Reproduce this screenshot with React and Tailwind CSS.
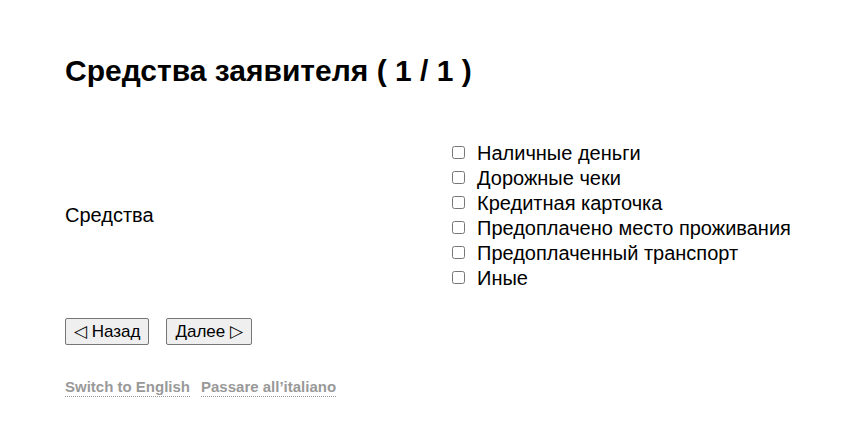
export default function App() {
  const options = [
    "Наличные деньги",
    "Дорожные чеки",
    "Кредитная карточка",
    "Предоплачено место проживания",
    "Предоплаченный транспорт",
    "Иные",
  ];

  return (
    <div className="min-h-screen bg-white px-[65px] pt-[52px] text-black" style={{ fontFamily: '"Liberation Sans", Arial, sans-serif' }}>
      <h1 className="text-[30px] font-bold leading-[38px]">Средства заявителя ( 1 / 1 )</h1>

      <div className="mt-[50px] flex items-center">
        <div className="w-[383px] shrink-0 text-[20px]">Средства</div>
        <div className="flex shrink-0 flex-col">
          {options.map((label) => (
            <label key={label} className="flex h-[25px] items-center whitespace-nowrap text-[20px]">
              <input type="checkbox" className="ml-[4px] mr-[12px] h-[13px] w-[13px]" />
              {label}
            </label>
          ))}
        </div>
      </div>

      <div className="mt-[28px] flex gap-[17px]">
        <button className="h-[27px] rounded-[2px] border border-[#767676] bg-[#efefef] px-[8px] text-[17px] leading-none">◁ Назад</button>
        <button className="h-[27px] rounded-[2px] border border-[#767676] bg-[#efefef] px-[8px] text-[17px] leading-none">Далее ▷</button>
      </div>

      <div className="mt-[33px] flex gap-[11px] text-[15px] font-bold text-[#999]">
        <a className="border-b border-dotted border-[#999] leading-[18px]">Switch to English</a>
        <a className="border-b border-dotted border-[#999] leading-[18px]">Passare all’italiano</a>
      </div>
    </div>
  );
}
